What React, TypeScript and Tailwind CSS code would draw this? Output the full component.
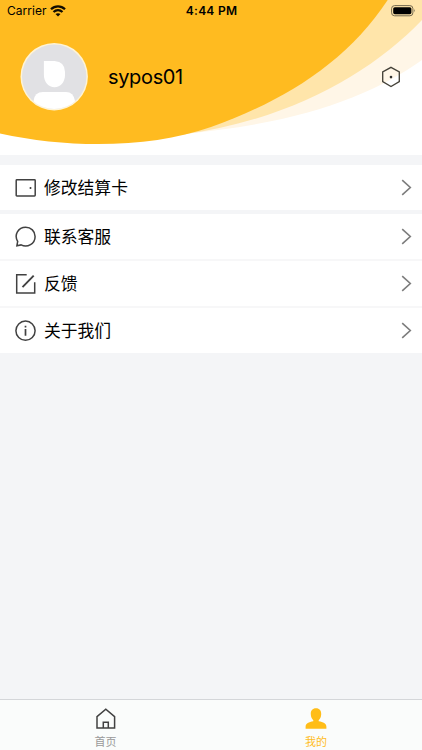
import type { ReactNode } from 'react';

function StatusBar() {
  return (
    <div className="flex h-[22px] items-center text-[12px] text-black">
      <div className="flex flex-1 items-center gap-[4px] pl-[7px]">
        <span className="tracking-[0.02px]">Carrier</span>
        <svg width="16" height="12" viewBox="0 0 16 12" fill="none" stroke="#120c00" strokeWidth="2.3">
          <path d="M1 4.3C5 .4 11 .4 15 4.3" />
          <path d="M3.5 7C6.1 4.6 9.9 4.6 12.5 7" />
          <path d="M5.5 9.1C7 7.8 9 7.8 10.5 9.1L8 11.6Z" fill="#120c00" stroke="none" />
        </svg>
      </div>
      <span className="font-semibold tracking-[0.25px]">4:44 PM</span>
      <div className="flex flex-1 justify-end pr-[6px]">
        <svg width="25" height="12" viewBox="0 0 25 12" fill="none">
          <rect x=".6" y=".6" width="21.3" height="10.2" rx="3" stroke="#74694f" />
          <rect x="2.2" y="2.2" width="18.2" height="7" rx="1.6" fill="#000" />
          <path d="M23.2 4.1q1.5 1.6 0 3.2z" fill="#74694f" />
        </svg>
      </div>
    </div>
  );
}

function Avatar() {
  return (
    <svg width="68" height="68" viewBox="0 0 68 68">
      <defs>
        <clipPath id="face"><circle cx="34.2" cy="33.7" r="32.3" /></clipPath>
      </defs>
      <circle cx="34.2" cy="33.7" r="33.7" fill="#fff4d5" />
      <circle cx="34.2" cy="33.7" r="32.2" fill="#e1e1e4" />
      <g clipPath="url(#face)" fill="#fff">
        <path d="M23.9 18.1H34.5Q45 19 45 29V32C45 39 40.5 44.2 34.5 44.2S23.9 39 23.9 32Z" />
        <path d="M13.5 68V58Q14.5 49 23 49H46Q53.5 49 55 58V68Z" />
      </g>
    </svg>
  );
}

function Header() {
  return (
    <header className="relative h-[155px] overflow-hidden bg-white">
      <svg className="absolute inset-0" width="422" height="155" viewBox="0 0 422 155">
        <path d="M180 0H422V60C373 95 300 124 180 134Z" fill="#fff6e7" />
        <path d="M180 0H422V20C370 74 290 120 180 135Z" fill="#ffe5aa" />
        <path d="M0 0H387.7C347 62 284 101 211 127C151 148 71 149 0 133.5Z" fill="#ffbb20" />
      </svg>
      <div className="relative">
        <StatusBar />
        <div className="flex items-center pl-5 pr-[21px] pt-[21px]">
          <Avatar />
          <span className="ml-[20px] flex-1 text-[20px] leading-[28px] tracking-[-0.35px] text-black">sypos01</span>
          <svg width="20" height="22" viewBox="0 0 20 22" fill="none" stroke="#454239" strokeWidth="1.35">
            <path d="M10 1.3L18.3 6V15.7L10 20.5L1.7 15.7V6Z" />
            <circle cx="10" cy="11.1" r="1.3" fill="#333" stroke="none" />
          </svg>
        </div>
      </div>
    </header>
  );
}

function Icon({ children }: { children: ReactNode }) {
  return (
    <svg width="22" height="22" viewBox="0.3 0.3 22 22" fill="none" stroke="#414141" strokeWidth="1.5">
      {children}
    </svg>
  );
}

function Row({ label, icon, className }: { label: string; icon: ReactNode; className: string }) {
  return (
    <div className={`flex items-center bg-white pl-[15px] pr-[10px] ${className}`}>
      <Icon>{icon}</Icon>
      <span className="ml-[7px] flex-1 text-[16.8px] leading-6 text-black">{label}</span>
      <svg width="11" height="17" viewBox="0 0 11 17" fill="none" stroke="#7c7c7c" strokeWidth="1.6">
        <path d="M1.2 1.2L9.3 8.5L1.2 15.8" />
      </svg>
    </div>
  );
}

function TabBar() {
  return (
    <nav className="grid h-[51px] grid-cols-2 border-t border-[#d4d6d9] bg-[#fafcfb] text-[11px] leading-[14px]">
      <div className="flex flex-col items-center pt-[7px] text-[#999]">
        <svg width="22" height="24" viewBox="0.2 0 22 24" fill="none" stroke="#414141" strokeWidth="1.5">
          <path d="M2.2 21.1V9.7L11 2.2L19.8 9.7V21.1Z" />
          <path d="M8.5 21V15.3H13.5V21" />
        </svg>
        <span className="mt-[4px]">首页</span>
      </div>
      <div className="flex flex-col items-center pr-px pt-[7px] text-[#ffbd25]">
        <svg width="22" height="24" viewBox="0 0 22 24" fill="#ffbd18">
          <path d="M11 1.3C14.5 1.3 16.4 3.8 16.2 7.3C16.1 10 15.2 12 13.7 13.2V14.3C18.2 15 21.4 16.6 21.4 19.7V21.8H.6V19.7C.6 16.6 3.8 15 8.3 14.3V13.2C6.8 12 5.9 10 5.8 7.3C5.6 3.8 7.5 1.3 11 1.3Z" />
        </svg>
        <span className="mt-[4px]">我的</span>
      </div>
    </nav>
  );
}

export default function App() {
  return (
    <div className="flex h-[750px] w-[422px] flex-col overflow-hidden bg-[#f4f5f7] font-['Inter','Noto_Sans_CJK_SC',sans-serif]">
      <Header />
      <main className="flex flex-1 flex-col pt-[10px]">
        <Row className="h-[45px]" label="修改结算卡" icon={<>
          <rect x="1.5" y="3" width="19" height="16.3" rx=".7" />
          <circle cx="15.8" cy="11.2" r="1" fill="#333" stroke="none" />
        </>} />
        <div className="mt-[4px] divide-y-2 divide-[#f7f7f8]">
          <Row className="h-[47px]" label="联系客服" icon={
            <path d="M2.2 20L3 15.8C-1 9 3.5 1.5 11 1.5C16.2 1.5 20.4 5.6 20.4 10.7C20.4 18 12.8 22.5 6.4 19.2Z" />
          } />
          <Row className="h-[47px]" label="反馈" icon={<>
            <path d="M12 2H2V20.2H20V9.6" />
            <path d="M7.8 14.4L19 3" strokeWidth="1.9" />
          </>} />
          <Row className="h-[45px]" label="关于我们" icon={<>
            <circle cx="10.8" cy="11" r="9.6" />
            <path d="M10.8 9.2V16M10.8 6V7.8" strokeWidth="1.7" />
          </>} />
        </div>
      </main>
      <TabBar />
    </div>
  );
}
